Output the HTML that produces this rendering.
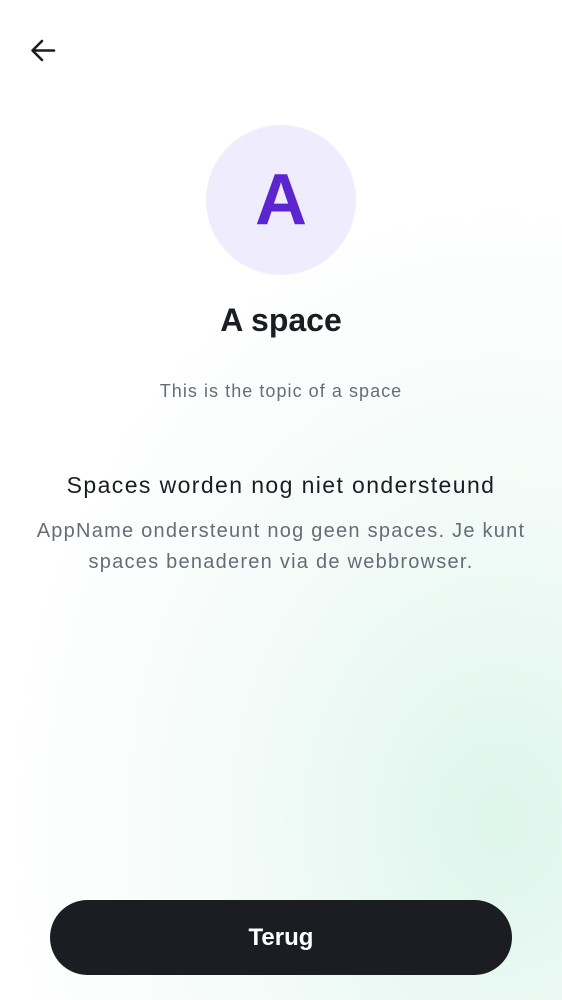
<!DOCTYPE html>
<html><head><meta charset="utf-8"><style>
html,body{margin:0;padding:0}
body{width:562px;height:1000px;position:relative;overflow:hidden;font-family:"Liberation Sans",sans-serif;
background:#fff;}
.bg{position:absolute;inset:0;background:
radial-gradient(ellipse 560px 700px at 500px 820px, rgba(218,244,234,0.9), rgba(234,248,242,0.5) 50%, rgba(255,255,255,0) 90%);}
.back{position:absolute;left:29px;top:37px}
.av{position:absolute;left:206px;top:125px;width:150px;height:150px;border-radius:50%;background:#efecfd;
color:#5b25d0;font-weight:bold;font-size:72px;line-height:150px;text-align:center}
.t{position:absolute;left:0;width:562px;text-align:center}
.btn{position:absolute;left:50px;top:900px;width:462px;height:75px;border-radius:38px;background:#1b1d22;color:#fff;
font-size:24px;font-weight:bold;line-height:75px;text-align:center}
</style></head><body>
<div class="bg"></div>
<svg class="back" width="28" height="28" viewBox="0 0 28 28"><path d="M25 13.5H4M13 4L3.5 13.5L13 23" fill="none" stroke="#1b1d22" stroke-width="2.6" stroke-linecap="round" stroke-linejoin="round"/></svg>
<div class="av">A</div>
<div class="t" style="top:302px;font-size:32px;font-weight:bold;color:#1b1d22">A space</div>
<div class="t" style="top:381px;font-size:18px;color:#656d77;letter-spacing:1.05px">This is the topic of a space</div>
<div class="t" style="top:472px;font-size:23px;color:#1b1d22;letter-spacing:1.4px">Spaces worden nog niet ondersteund</div>
<div class="t" style="top:516px;font-size:20px;color:#656d77;line-height:31px;letter-spacing:1.25px">AppName ondersteunt nog geen spaces. Je kunt<br>spaces benaderen via de webbrowser.</div>
<div class="btn">Terug</div>
</body></html>
